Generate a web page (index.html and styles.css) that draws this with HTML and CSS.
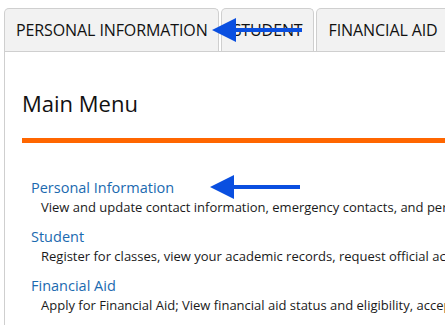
FILE: index.html
```html
<!DOCTYPE html>
<html>
<head>
<meta charset="utf-8">
<link rel="stylesheet" href="styles.css">
</head>
<body>
<div class="page">
  <div class="tabs">
    <div class="tab">PERSONAL INFORMATION</div>
    <div class="tab">STUDENT</div>
    <div class="tab tab-last">FINANCIAL AID</div>
  </div>
  <div class="panel">
    <h1 class="title">Main Menu</h1>
    <div class="rule"></div>
    <ul class="menu">
      <li class="item">
        <a class="link">Personal Information</a>
        <div class="desc">View and update contact information, emergency contacts, and personal details</div>
      </li>
      <li class="item">
        <a class="link">Student</a>
        <div class="desc">Register for classes, view your academic records, request official academic transcripts</div>
      </li>
      <li class="item">
        <a class="link">Financial Aid</a>
        <div class="desc">Apply for Financial Aid; View financial aid status and eligibility, accept award offers</div>
      </li>
    </ul>
  </div>
  <svg class="arrow arrow-tab" width="92" height="26" viewBox="0 0 92 26"><path d="M0 13 L24 1 L24 11 L90 11 L90 15 L24 15 L24 25 Z" fill="#0a4fe0"/></svg>
  <svg class="arrow arrow-link" width="92" height="26" viewBox="0 0 92 26"><path d="M0 13 L24 1 L24 11 L90 11 L90 15 L24 15 L24 25 Z" fill="#0a4fe0"/></svg>
</div>
</body>
</html>
```
FILE: styles.css
```css
html, body {
  margin: 0;
  padding: 0;
  background: #ffffff;
  overflow: hidden;
}
.page {
  position: relative;
  width: 445px;
  height: 325px;
  overflow: hidden;
  padding: 8px 0 0 4px;
  box-sizing: border-box;
  font-family: "Open Sans", "Noto Sans", sans-serif;
  color: #111;
}
.tabs {
  display: flex;
  gap: 2px;
  white-space: nowrap;
}
.tab {
  flex: none;
  height: 42px;
  line-height: 42px;
  padding: 0 10px 0 11px;
  border: 1px solid #cfcfcf;
  border-bottom: none;
  border-radius: 5px 5px 0 0;
  background: #f2f2f2;
  font-size: 16px;
  letter-spacing: -0.1px;
  color: #111;
}
.tab-last {
  padding-left: 12px;
}
.panel {
  border-top: 1px solid #cfcfcf;
  border-left: 1px solid #cfcfcf;
  padding: 0 0 0 17px;
  height: 300px;
}
.title {
  margin: 36px 0 0 0;
  font-size: 22px;
  font-weight: 400;
  line-height: 30px;
  color: #111;
}
.rule {
  margin-top: 20px;
  height: 5px;
  background: #ff6600;
  width: 500px;
}
.menu {
  list-style: none;
  margin: 35px 0 0 0;
  padding: 0 0 0 9px;
  white-space: nowrap;
}
.item {
  margin-bottom: 10px;
}
.link {
  display: block;
  font-size: 14.5px;
  line-height: 20px;
  color: #1b6ab0;
}
.desc {
  padding-left: 10px;
  font-size: 13px;
  line-height: 19px;
  color: #1a1a1a;
}
.arrow {
  position: absolute;
}
.arrow-tab {
  left: 212px;
  top: 17px;
}
.arrow-link {
  left: 210px;
  top: 174px;
}
```
